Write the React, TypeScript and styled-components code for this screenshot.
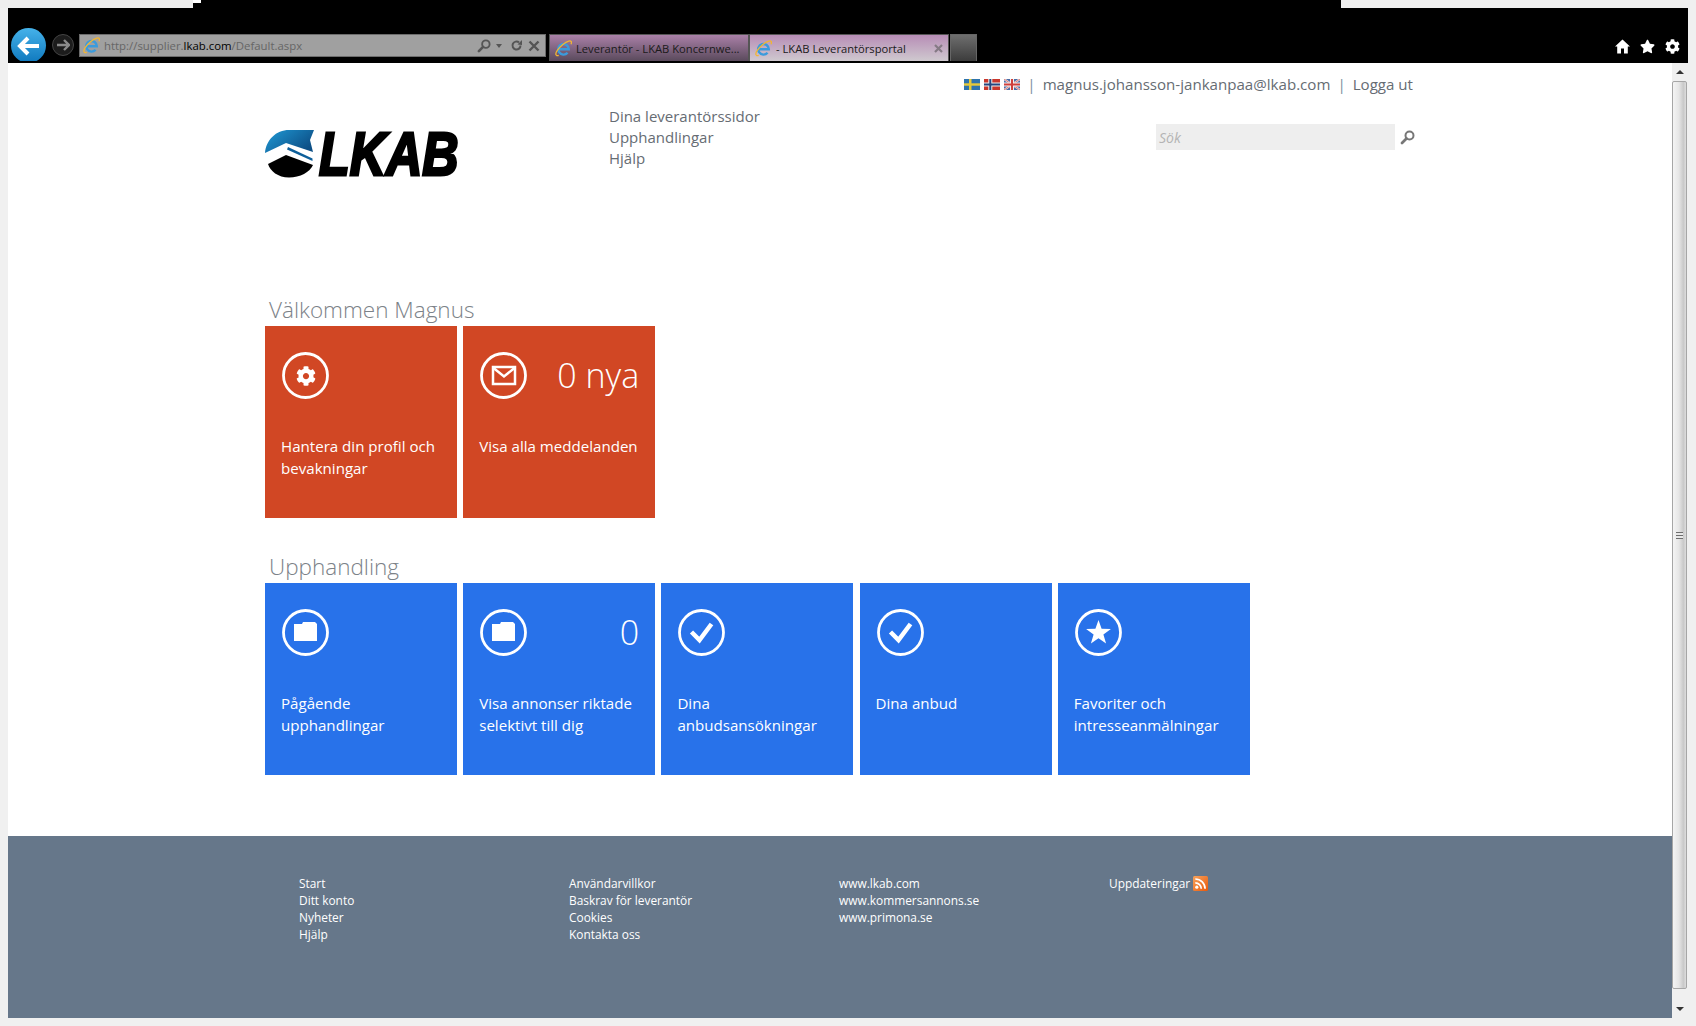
import React from "react"
import styled, { createGlobalStyle } from "styled-components"
import { FaStar, FaCog } from "react-icons/fa"

const sans = `"Open Sans", "Noto Sans", sans-serif`

const GlobalStyle = createGlobalStyle`
  html, body { margin: 0; padding: 0; background: #f0f0f0; overflow: hidden; }
  body { font-family: ${sans}; }
  a { color: inherit; text-decoration: none; }
`

const IeIcon = () => (
  <svg width="17" height="17" viewBox="0 0 16 16">
    <path d="M3 8.700H13A5 5 0 1 0 11.800 12" fill="none" stroke="#3b9bdc" strokeWidth="2.300" />
    <path d="M3.500 14.500C.5 15.500 0 13 2 10 4.500 6 9.500 2 13 1c2.500-.5 3 1 2 3" fill="none" stroke="#f2b632" strokeWidth="1.200" />
  </svg>
)

const SearchGlyph = ({ size = 15, color = "#777" }: { size?: number; color?: string }) => (
  <svg width={size} height={size} viewBox="0 0 15 15">
    <circle cx="9.500" cy="5.500" r="4" fill="none" stroke={color} strokeWidth="2" />
    <path d="M6.500 8.500 2 13" stroke={color} strokeWidth="2.800" strokeLinecap="round" />
  </svg>
)

const HomeGlyph = () => (
  <svg width="15" height="15" viewBox="0 0 15 15">
    <path d="M7.500 .5 15 7.500H12.800V14.500H9V9.500H6V14.500H2.200V7.500H0z" fill="#fff" />
  </svg>
)

const SwedishFlag = () => (
  <svg width="16" height="11" viewBox="0 0 16 11">
    <rect width="16" height="11" fill="#2f74ad" />
    <rect x="5" width="2.500" height="11" fill="#e6c93a" />
    <rect y="4.300" width="16" height="2.400" fill="#e6c93a" />
  </svg>
)

const NorwegianFlag = () => (
  <svg width="16" height="11" viewBox="0 0 16 11">
    <rect width="16" height="11" fill="#c9372c" />
    <rect x="4.300" width="4" height="11" fill="#f2f2f2" />
    <rect y="3.500" width="16" height="4" fill="#f2f2f2" />
    <rect x="5.300" width="2" height="11" fill="#27477f" />
    <rect y="4.500" width="16" height="2" fill="#27477f" />
  </svg>
)

const BritishFlag = () => (
  <svg width="16" height="11" viewBox="0 0 16 11">
    <rect width="16" height="11" fill="#4a6ca6" />
    <path d="M0 0 16 11M16 0 0 11" stroke="#f0e4e4" strokeWidth="2" />
    <path d="M0 0 16 11M16 0 0 11" stroke="#d0504c" strokeWidth=".7" />
    <rect x="6" width="4" height="11" fill="#f2f2f2" />
    <rect y="3.500" width="16" height="4" fill="#f2f2f2" />
    <rect x="7" width="2" height="11" fill="#d0403c" />
    <rect y="4.500" width="16" height="2" fill="#d0403c" />
  </svg>
)

const RssIcon = () => (
  <svg width="15" height="15" viewBox="0 0 15 15">
    <defs>
      <linearGradient id="rss" x1="0" y1="0" x2="1" y2="1">
        <stop offset="0" stopColor="#f7a35c" />
        <stop offset="1" stopColor="#e8590c" />
      </linearGradient>
    </defs>
    <rect width="15" height="15" rx="1.500" fill="url(#rss)" />
    <circle cx="3.800" cy="11.200" r="1.600" fill="#fff" />
    <path d="M2.300 6.800a6 6 0 0 1 6 6M2.300 3a9.800 9.800 0 0 1 9.800 9.800" fill="none" stroke="#fff" strokeWidth="1.700" />
  </svg>
)

const TileIcon = ({ kind }: { kind: string }) => (
  <svg width="47" height="47" viewBox="0 0 47 47">
    <circle cx="23.500" cy="23.500" r="22" fill="none" stroke="#fff" strokeWidth="2.800" />
    {kind === "mail" && (
      <g fill="none" stroke="#fff" strokeWidth="2.500">
        <rect x="13" y="15" width="22" height="17" />
        <path d="M13.500 16l10.500 8.500 10.500-8.500" />
      </g>
    )}
    {kind === "folder" && <path d="M12 15h8l1-2h12l2 2v17H12z" fill="#fff" />}
    {kind === "check" && <path d="M13.500 23l8 8 12-16" fill="none" stroke="#fff" strokeWidth="4.500" />}
    {kind === "star" && <path d="M23.500 11l3.100 8.800 9.300.2-7.500 5.600 2.700 8.900-7.600-5.300-7.600 5.300 2.700-8.900-7.500-5.600 9.300-.2z" fill="#fff" />}
  </svg>
)

const App = () => {
  return (
    <>
      <GlobalStyle />
      <TopStrip>
        <StripGap />
        <StripNotch />
        <StripBlack />
      </TopStrip>
      <BrowserWindow>
        <Toolbar>
          <NavButtons>
            <BackButton>
              <svg width="24" height="20" viewBox="0 0 24 20">
                <path d="M11 2 3 10l8 8M4 10h18" fill="none" stroke="#fff" strokeWidth="4" />
              </svg>
            </BackButton>
            <ForwardButton>
              <svg width="14" height="12" viewBox="0 0 14 12">
                <path d="M8 1l5 5-5 5M12 6H1" fill="none" stroke="#8a8a8a" strokeWidth="2.400" />
              </svg>
            </ForwardButton>
          </NavButtons>
          <AddressBar>
            <IeIcon />
            <AddressText>
              http://supplier.<b>lkab.com</b>/Default.aspx
            </AddressText>
            <AddressTools>
              <SearchGlyph size={14} color="#555" />
              <Caret />
              <svg width="13" height="13" viewBox="0 0 13 13">
                <path d="M10.500 6.500a4 4 0 1 1-1.500-3.100" fill="none" stroke="#555" strokeWidth="2" />
                <path d="M7.500 5.500 12 6V1z" fill="#555" />
              </svg>
              <svg width="12" height="12" viewBox="0 0 12 12">
                <path d="M1.500 1.500l9 9M10.500 1.500l-9 9" stroke="#555" strokeWidth="2.400" />
              </svg>
            </AddressTools>
          </AddressBar>
          <TabStrip>
            <Tab>
              <IeIcon />
              <TabTitle>Leverantör - LKAB Koncernwe...</TabTitle>
            </Tab>
            <Tab $active>
              <IeIcon />
              <TabTitle>- LKAB Leverantörsportal</TabTitle>
              <TabClose>
                <svg width="9" height="9" viewBox="0 0 9 9">
                  <path d="M1 1l7 7M8 1 1 8" stroke="#857a85" strokeWidth="2.200" />
                </svg>
              </TabClose>
            </Tab>
            <NewTab />
          </TabStrip>
          <ToolIcons>
            <HomeGlyph />
            <FaStar size={15} />
            <FaCog size={15} />
          </ToolIcons>
        </Toolbar>
        <Viewport>
          <Page>
            <UserBar>
              <Flags>
                <SwedishFlag />
                <NorwegianFlag />
                <BritishFlag />
              </Flags>
              <Separator>|</Separator>
              <a>magnus.johansson-jankanpaa@lkab.com</a>
              <Separator>|</Separator>
              <a>Logga ut</a>
            </UserBar>
            <Header>
              <Logo>
                <LogoMark viewBox="0 0 49 48" width="49" height="48">
                  <defs>
                    <linearGradient id="globe" x1="0" y1="0" x2="1" y2="0.600">
                      <stop offset="0" stopColor="#1f9ad6" />
                      <stop offset="1" stopColor="#0d4f86" />
                    </linearGradient>
                  </defs>
                  <path d="M0 23C1 10 11 0 24 0H49L45 10 48 22 21 13 0 23z" fill="url(#globe)" />
                  <path d="M23 17 47.500 28.500V31L22 19.500z" fill="#0d5f9a" />
                  <path d="M3 34 21 25 48 35C45 42 35 47.500 24 47.500 13 47.500 5 41 3 34z" fill="#000" />
                </LogoMark>
                <LogoText>LKAB</LogoText>
              </Logo>
              <MainMenu>
                <a>Dina leverantörssidor</a>
                <a>Upphandlingar</a>
                <a>Hjälp</a>
              </MainMenu>
              <SearchBox>
                <SearchInput>Sök</SearchInput>
                <SearchGlyph />
              </SearchBox>
            </Header>
            <Section>
              <SectionTitle>Välkommen Magnus</SectionTitle>
              <TileRow>
                <Tile $color="#d14724">
                  <TileTop>
                    <TileIconWrap>
                      <TileIcon kind="gear" />
                      <GearGlyph><FaCog size={20} /></GearGlyph>
                    </TileIconWrap>
                  </TileTop>
                  <TileLabel>Hantera din profil och bevakningar</TileLabel>
                </Tile>
                <Tile $color="#d14724">
                  <TileTop>
                    <TileIconWrap><TileIcon kind="mail" /></TileIconWrap>
                    <TileCount>0 nya</TileCount>
                  </TileTop>
                  <TileLabel>Visa alla meddelanden</TileLabel>
                </Tile>
              </TileRow>
            </Section>
            <Section $second>
              <SectionTitle>Upphandling</SectionTitle>
              <TileRow>
                <Tile $color="#2872ea" $tall>
                  <TileTop><TileIconWrap><TileIcon kind="folder" /></TileIconWrap></TileTop>
                  <TileLabel>Pågående upphandlingar</TileLabel>
                </Tile>
                <Tile $color="#2872ea" $tall>
                  <TileTop>
                    <TileIconWrap><TileIcon kind="folder" /></TileIconWrap>
                    <TileCount>0</TileCount>
                  </TileTop>
                  <TileLabel>Visa annonser riktade selektivt till dig</TileLabel>
                </Tile>
                <Tile $color="#2872ea" $tall>
                  <TileTop><TileIconWrap><TileIcon kind="check" /></TileIconWrap></TileTop>
                  <TileLabel>Dina anbudsansökningar</TileLabel>
                </Tile>
                <Tile $color="#2872ea" $tall>
                  <TileTop><TileIconWrap><TileIcon kind="check" /></TileIconWrap></TileTop>
                  <TileLabel>Dina anbud</TileLabel>
                </Tile>
                <Tile $color="#2872ea" $tall>
                  <TileTop><TileIconWrap><TileIcon kind="star" /></TileIconWrap></TileTop>
                  <TileLabel>Favoriter och intresseanmälningar</TileLabel>
                </Tile>
              </TileRow>
            </Section>
            <Footer>
              <FooterColumn>
                <a>Start</a>
                <a>Ditt konto</a>
                <a>Nyheter</a>
                <a>Hjälp</a>
              </FooterColumn>
              <FooterColumn>
                <a>Användarvillkor</a>
                <a>Baskrav för leverantör</a>
                <a>Cookies</a>
                <a>Kontakta oss</a>
              </FooterColumn>
              <FooterColumn>
                <a>www.lkab.com</a>
                <a>www.kommersannons.se</a>
                <a>www.primona.se</a>
              </FooterColumn>
              <FooterColumn>
                <FeedLink>Uppdateringar <RssIcon /></FeedLink>
              </FooterColumn>
            </Footer>
          </Page>
          <Scrollbar>
            <ScrollArrow><ArrowUp /></ScrollArrow>
            <ScrollThumb><Grip /></ScrollThumb>
            <ScrollArrow $bottom><ArrowDown /></ScrollArrow>
          </Scrollbar>
        </Viewport>
      </BrowserWindow>
    </>
  )
}

export default App

const TopStrip = styled.div`
display: flex;
height: 8px;`

const StripGap = styled.div`
width: 193px;
background: #eeeeee;`

const StripNotch = styled.div`
width: 8px;
background: linear-gradient(#ffffff 3px, #000 3px);`

const StripBlack = styled.div`
width: 1140px;
background: #000;`

const BrowserWindow = styled.div`
margin: 0 8px;
height: 1010px;
display: flex;
flex-direction: column;`

const Toolbar = styled.div`
height: 55px;
flex: none;
background: #000;
display: flex;
align-items: flex-end;`

const NavButtons = styled.div`
display: flex;
align-items: flex-start;
width: 71px;
height: 33px;
margin-bottom: 2px;
overflow: hidden;
padding-left: 3px;
box-sizing: border-box;
flex: none;`

const BackButton = styled.div`
width: 35px;
height: 35px;
flex: none;
border-radius: 50%;
background: linear-gradient(#45b2ea, #0f78bd);
display: flex;
align-items: center;
justify-content: center;`

const ForwardButton = styled.div`
width: 22px;
height: 22px;
flex: none;
margin: 6px 0 0 6px;
border-radius: 50%;
border: 1px solid #444;
box-sizing: border-box;
background: #1c1c1c;
display: flex;
align-items: center;
justify-content: center;`

const AddressBar = styled.div`
width: 467px;
height: 23px;
margin-bottom: 6px;
box-sizing: border-box;
border: 1px solid #6c6c6c;
background: #a0a0a0;
display: flex;
align-items: center;
padding: 0 5px 0 3px;
flex: none;`

const AddressText = styled.div`
margin-left: 4px;
font-size: 11.4px;
color: #666;
flex: 1;
b { font-weight: 400; color: #000; }`

const AddressTools = styled.div`
display: flex;
align-items: center;
gap: 5px;`

const Caret = styled.div`
width: 0;
height: 0;
border: 3.5px solid transparent;
border-top: 4px solid #555;
margin: 3px 3px 0 0;`

const TabStrip = styled.div`
display: flex;
height: 27px;
margin-left: 3px;
margin-bottom: 2px;`

const Tab = styled.div<{ $active?: boolean }>`
width: 200px;
box-sizing: border-box;
border: 1px solid #555;
border-bottom: none;
display: flex;
align-items: center;
padding-left: 5px;
gap: 4px;
background: ${(p) => (p.$active ? "linear-gradient(#b78db6, #cfc9cf)" : "linear-gradient(#aa80a8, #5a4a5c)")};`

const TabTitle = styled.div`
font-size: 11.2px;
color: #1a1a1a;
white-space: nowrap;`

const TabClose = styled.div`
margin-left: auto;
margin-right: 5px;
display: flex;`

const NewTab = styled.div`
width: 27px;
margin-left: 1px;
box-sizing: border-box;
border: 1px solid #666;
border-bottom: none;
background: linear-gradient(#6e6e6e, #3c3c3c);`

const ToolIcons = styled.div`
margin-left: auto;
height: 28px;
display: flex;
align-items: center;
gap: 10px;
padding: 0 8px 6px 0;
box-sizing: border-box;
color: #fff;`

const Viewport = styled.div`
flex: 1;
display: flex;
min-height: 0;`

const Page = styled.div`
flex: 1;
min-width: 0;
background: #fff;
display: flex;
flex-direction: column;
color: #666c73;`

const UserBar = styled.div`
height: 42px;
box-sizing: border-box;
padding: 10px 259px 0 0;
display: flex;
justify-content: flex-end;
align-items: flex-start;
font-size: 15.1px;
line-height: 22px;`

const Flags = styled.div`
display: flex;
gap: 4px;
margin-top: 6px;`

const Separator = styled.span`
margin: 0 7px;
color: #7a8ea0;`

const Header = styled.div`
height: 189px;
flex: none;
padding: 0 257px 0 257px;
display: flex;
align-items: flex-start;`

const Logo = styled.div`
width: 344px;
flex: none;
margin-top: 25px;
display: flex;
align-items: center;
gap: 5px;`

const LogoMark = styled.svg`
flex: none;`

const LogoText = styled.div`
font-family: "Liberation Sans", Arial, sans-serif;
font-weight: 700;
font-style: italic;
font-size: 62px;
line-height: 48px;
color: #000;
-webkit-text-stroke: 3px #000;
transform: scaleX(0.81);
transform-origin: left center;`

const MainMenu = styled.div`
display: flex;
flex-direction: column;
padding-top: 1px;
font-size: 15px;
line-height: 21px;`

const SearchBox = styled.div`
margin: 19px 0 0 auto;
display: flex;
align-items: center;
gap: 5px;`

const SearchInput = styled.div`
width: 239px;
height: 26px;
box-sizing: border-box;
background: #eeeeee;
padding-left: 3px;
font-size: 14px;
line-height: 28px;
font-style: italic;
color: #b4b4b4;`

const Section = styled.div<{ $second?: boolean }>`
padding-left: 257px;
margin-top: ${(p) => (p.$second ? "33px" : "0")};`

const SectionTitle = styled.div`
padding-left: 4px;
height: 32px;
font-size: 22.5px;
font-weight: 300;
line-height: 32px;
color: #7c8288;`

const TileRow = styled.div`
display: flex;
gap: 6.2px;`

const Tile = styled.div<{ $color: string; $tall?: boolean }>`
width: 192px;
height: 192px;
box-sizing: border-box;
padding: 26px 16px 0 16px;
background: ${(p) => p.$color};
color: #fff;
font-size: 15.1px;
line-height: ${(p) => (p.$tall ? "22px" : "21.5px")};
> div:first-child { margin-bottom: ${(p) => (p.$tall ? "36px" : "37px")}; }`

const TileTop = styled.div`
height: 47px;
display: flex;
justify-content: space-between;
align-items: center;`

const TileIconWrap = styled.div`
width: 47px;
height: 47px;
position: relative;
margin-left: 1px;`

const GearGlyph = styled.div`
position: absolute;
left: 13.5px;
top: 13.5px;
display: flex;`

const TileCount = styled.div`
font-size: 34px;
font-weight: 300;
line-height: 47px;`

const TileLabel = styled.div`
margin-right: -8px;`

const Footer = styled.div`
margin-top: auto;
height: 182px;
flex: none;
box-sizing: border-box;
background: #66778a;
padding: 39px 0 0 291px;
display: flex;
color: #fff;
font-size: 11.9px;
line-height: 17px;`

const FooterColumn = styled.div`
width: 270px;
display: flex;
flex-direction: column;`

const FeedLink = styled.a`
display: flex;
align-items: center;
gap: 3px;`

const Scrollbar = styled.div`
width: 16px;
flex: none;
background: #f0f0f0;
display: flex;
flex-direction: column;`

const ScrollArrow = styled.div<{ $bottom?: boolean }>`
height: 18px;
flex: none;
display: flex;
align-items: center;
justify-content: center;
margin-top: ${(p) => (p.$bottom ? "auto" : "0")};`

const ArrowUp = styled.div`
width: 0;
height: 0;
border: 4px solid transparent;
border-bottom: 4px solid #333;
border-top: none;`

const ArrowDown = styled.div`
width: 0;
height: 0;
border: 4px solid transparent;
border-top: 4px solid #333;
border-bottom: none;`

const ScrollThumb = styled.div`
height: 908px;
margin: 0 1px 0 0;
box-sizing: border-box;
border: 1px solid #a6a6a6;
border-radius: 2px;
background: linear-gradient(90deg, #f4f4f4, #e6e6e6 45%, #c9c9c9 80%, #dddddd);
display: flex;
align-items: center;
justify-content: center;`

const Grip = styled.div`
width: 7px;
height: 7px;
background: repeating-linear-gradient(#6e6e6e 0 1px, #e8e8e8 1px 3px);`
